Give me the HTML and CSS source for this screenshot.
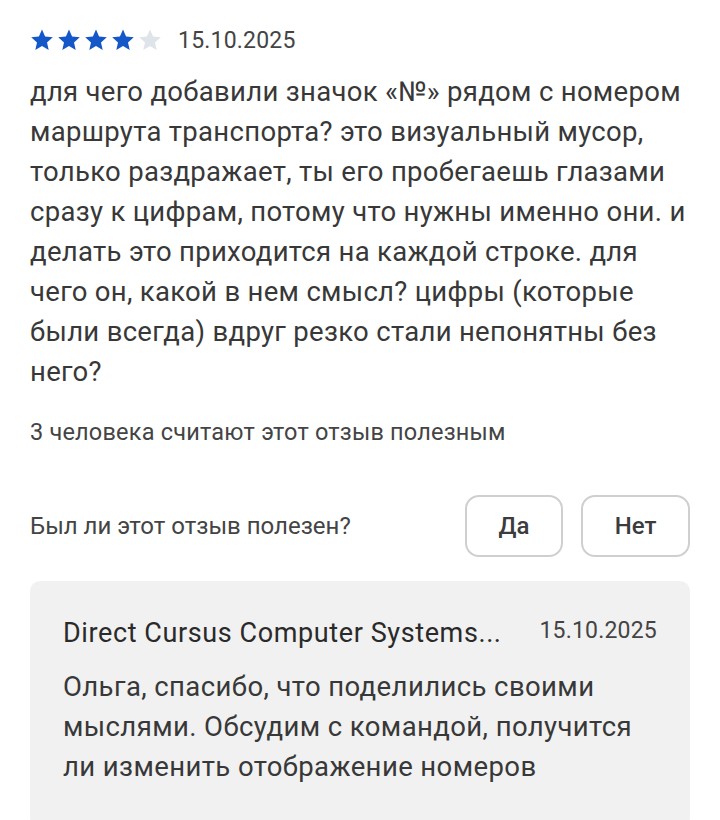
FILE: index.html
```html
<!DOCTYPE html>
<html lang="ru">
<head>
<meta charset="utf-8">
<link rel="stylesheet" href="styles.css">
</head>
<body>
<div class="review">
  <div class="meta">
    <div class="stars">
      <svg class="star on" viewBox="0 0 24 24"><path d="M12 1.5l3.1 7.1 7.7.7-5.8 5.1 1.7 7.6L12 18.1 5.3 22l1.7-7.6-5.8-5.1 7.7-.7z"/></svg>
      <svg class="star on" viewBox="0 0 24 24"><path d="M12 1.5l3.1 7.1 7.7.7-5.8 5.1 1.7 7.6L12 18.1 5.3 22l1.7-7.6-5.8-5.1 7.7-.7z"/></svg>
      <svg class="star on" viewBox="0 0 24 24"><path d="M12 1.5l3.1 7.1 7.7.7-5.8 5.1 1.7 7.6L12 18.1 5.3 22l1.7-7.6-5.8-5.1 7.7-.7z"/></svg>
      <svg class="star on" viewBox="0 0 24 24"><path d="M12 1.5l3.1 7.1 7.7.7-5.8 5.1 1.7 7.6L12 18.1 5.3 22l1.7-7.6-5.8-5.1 7.7-.7z"/></svg>
      <svg class="star off" viewBox="0 0 24 24"><path d="M12 1.5l3.1 7.1 7.7.7-5.8 5.1 1.7 7.6L12 18.1 5.3 22l1.7-7.6-5.8-5.1 7.7-.7z"/></svg>
    </div>
    <span class="date">15.10.2025</span>
  </div>
  <p class="text">для чего добавили значок «№» рядом с номером маршрута транспорта? это визуальный мусор, только раздражает, ты его пробегаешь глазами сразу к цифрам, потому что нужны именно они. и делать это приходится на каждой строке. для чего он, какой в нем смысл? цифры (которые были всегда) вдруг резко стали непонятны без него?</p>
  <p class="helpful-count">3 человека считают этот отзыв полезным</p>
  <div class="vote">
    <span class="vote-q">Был ли этот отзыв полезен?</span>
    <div class="vote-btns">
      <button class="btn btn-yes">Да</button>
      <button class="btn btn-no">Нет</button>
    </div>
  </div>
  <div class="reply">
    <div class="reply-head">
      <span class="reply-name">Direct Cursus Computer Systems...</span>
      <span class="reply-date">15.10.2025</span>
    </div>
    <p class="reply-text">Ольга, спасибо, что поделились своими мыслями. Обсудим с командой, получится ли изменить отображение номеров</p>
  </div>
</div>
</body>
</html>
```
FILE: styles.css
```css
* { box-sizing: border-box; }
html, body { margin: 0; padding: 0; background: #fff; }
body {
  font-family: Roboto, "Noto Sans", sans-serif;
  color: #3a3a3a;
  width: 720px;
  height: 820px;
  overflow: hidden;
}
.review {
  padding: 24px 30px 0 30px;
}
.meta {
  display: flex;
  align-items: center;
  height: 32px;
}
.stars {
  display: flex;
  gap: 3px;
}
.star { width: 24px; height: 24px; }
.star.on { fill: #1457c8; }
.star.off { fill: #dfe4ea; }
.date {
  margin-left: 16px;
  font-size: 23px;
  color: #444;
  letter-spacing: 0.2px;
}
.text {
  margin: 16px -4px 0 0;
  font-size: 27.5px;
  line-height: 40px;
  color: #383838;
  letter-spacing: 0.3px;
}
.helpful-count {
  margin: 26px 0 0 0;
  font-size: 23.5px;
  line-height: 28px;
  color: #444;
  letter-spacing: 0.2px;
}
.vote {
  display: flex;
  align-items: center;
  justify-content: space-between;
  margin-top: 49px;
}
.vote-q {
  font-size: 24px;
  color: #444;
}
.vote-btns {
  display: flex;
  gap: 18px;
}
.btn {
  font-family: Roboto, sans-serif;
  font-size: 24px;
  font-weight: 500;
  color: #3c3c3c;
  background: #fff;
  border: 2px solid #cfcfcf;
  border-radius: 14px;
  height: 62px;
  padding: 0;
}
.btn-yes { width: 98px; }
.btn-no { width: 109px; }
.reply {
  margin-top: 24px;
  background: #f1f1f1;
  border-radius: 10px;
  padding: 36px 33px 40px 33px;
}
.reply-head {
  display: flex;
  justify-content: space-between;
  align-items: center;
  line-height: 32px;
}
.reply-name {
  font-size: 27px;
  color: #2a2a2a;
  letter-spacing: 0.6px;
}
.reply-date {
  font-size: 23px;
  color: #444;
  letter-spacing: 0.2px;
  margin-top: -4px;
}
.reply-text {
  margin: 18px 0 0 0;
  font-size: 27.5px;
  line-height: 40px;
  color: #383838;
  letter-spacing: 0.4px;
}
```
